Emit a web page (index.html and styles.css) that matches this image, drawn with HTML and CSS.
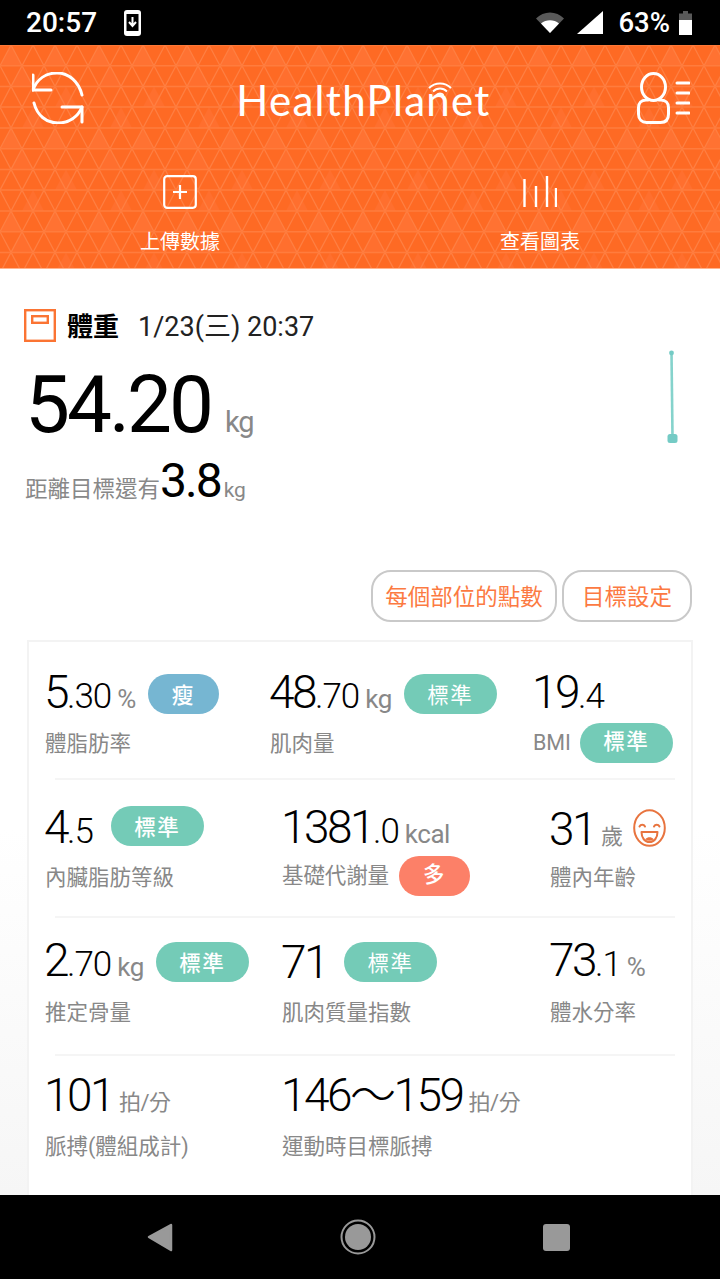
FILE: index.html
```html
<!DOCTYPE html>
<html lang="zh-Hant">
<head>
  <meta charset="UTF-8" />
  <meta name="viewport" content="width=device-width, initial-scale=1.0" />
  <title>HealthPlanet</title>
  <link rel="stylesheet" href="styles.css">
</head>
<body>
  <div class="status-bar">
    <span class="clock">20:57</span>
    <svg class="dl-icon" width="17" height="26" viewBox="0 0 17 26">
      <rect x="0" y="0" width="17" height="26" rx="3" fill="#fff"/>
      <rect x="2.500" y="4" width="12" height="17" fill="#000"/>
      <path d="M8.500 7v8M5 12l3.500 4 3.500-4" stroke="#fff" stroke-width="2" fill="none"/>
    </svg>
    <span class="status-right">
      <svg width="28" height="21" viewBox="0 0 28 21">
        <path d="M0 6.500C7.500-1.500 20.500-1.500 28 6.500L14 21z" fill="#fff" fill-opacity=".35"/>
        <path d="M5 11.500c5.200-4.300 12.800-4.300 18 0L14 21z" fill="#fff"/>
      </svg>
      <svg class="signal" width="26" height="23" viewBox="0 0 26 23"><path d="M26 0v23H0z" fill="#fff"/></svg>
      <span class="battery-pct">63%</span>
      <svg class="battery" width="13" height="24" viewBox="0 0 13 24">
        <path d="M4 0h5v2.500h4V24H0V2.500h4z" fill="#fff" fill-opacity=".35"/>
        <path d="M0 9h13v15H0z" fill="#fff"/>
      </svg>
    </span>
  </div>

  <header class="top">
    <svg class="top-bg" width="100%" height="100%">
      <defs>
        <pattern id="tri" width="88" height="83" patternUnits="userSpaceOnUse">
          <rect width="88" height="83" fill="#fe6a24"/>
          <path d="M11 0l11 20.700H0zM55 0l11 20.700H44z" fill="#ff7232"/>
          <path d="M22 20.700l11 20.700H11zM66 41.400l11 20.700H55zM33 62.100l11 20.900H22z" fill="#ff6f2e"/>
          <path d="M0 20.700L11 0l11 20.700L33 0l11 20.700L55 0l11 20.700L77 0l11 20.700M0 20.700l11 20.700 11-20.700 11 20.700 11-20.700 11 20.700 11-20.700 11 20.700 11-20.700M0 62.100l11-20.700 11 20.700 11-20.700 11 20.700 11-20.700 11 20.700 11-20.700 11 20.700M0 62.100L11 83l11-20.900L33 83l11-20.900L55 83l11-20.900L77 83l11-20.900" stroke="#ff7f42" stroke-width="1.200" fill="none"/>
          <path d="M0 20.700h88M0 41.400h88M0 62.100h88M0 83h88M0 0h88" stroke="#ff7c3d" stroke-width="1.500"/>
        </pattern>
      </defs>
      <rect width="100%" height="100%" fill="url(#tri)"/>
    </svg>
    <div class="top-row">
      <svg width="52" height="52" viewBox="0 0 52 52" fill="none" stroke="#fff" stroke-width="3" stroke-linecap="round" stroke-linejoin="round">
        <path d="M1 18C5 7 14 1 25 1c12 0 22 9 25 22"/>
        <path d="M1 3v15h18"/>
        <path d="M2 31c3 12 12 20 24 20 11 0 20-6 24-16"/>
        <path d="M50 50V35H30"/>
      </svg>
      <div class="logo">HealthPlanet
        <svg class="logo-wifi" width="24" height="15" viewBox="0 0 24 15" fill="none" stroke="#fff" stroke-width="1.800">
          <path d="M1 6c6-6 16-6 22 0M5 9.500c4-4 10-4 14 0M8.500 13c2-2 5-2 7 0"/>
        </svg>
      </div>
      <svg width="53" height="52" viewBox="0 0 53 52" fill="none" stroke="#fff" stroke-width="3" stroke-linecap="round">
        <ellipse cx="16.500" cy="15" rx="12" ry="13.500"/>
        <path d="M11 28H9C4.500 28 1.500 31 1.500 35.500V42c0 5.500 3.500 8.500 8 8.500h14c5 0 8-3 8-8.500v-6.500c0-4.500-3-7.500-7.500-7.500h-2"/>
        <path d="M40 11h12M40 21h12M40 31h12M40 41h12"/>
      </svg>
    </div>
    <div class="actions">
      <div class="action">
        <svg width="34" height="34" viewBox="0 0 34 34" fill="none" stroke="#fff" stroke-width="2.200">
          <rect x="1.200" y="1.200" width="31.600" height="31.600" rx="3"/>
          <path d="M10 17h14M17 10v14"/>
        </svg>
        <span>上傳數據</span>
      </div>
      <div class="action">
        <svg width="34" height="34" viewBox="0 0 34 34" fill="none" stroke="#fff" stroke-width="2.400">
          <path d="M1.500 4v28M13 11v21M24 1v31M33 13v19"/>
        </svg>
        <span>查看圖表</span>
      </div>
    </div>
  </header>

  <main class="content">
    <section class="weight">
      <div class="weight-left">
        <div class="weight-head">
          <svg width="32" height="33" viewBox="0 0 32 33" fill="none" stroke="#fb7433" stroke-width="2.400">
            <rect x="1.200" y="1.200" width="29.600" height="30.600"/>
            <rect x="8.200" y="7.200" width="15.600" height="6.600"/>
          </svg>
          <b>體重</b>
          <span class="weight-date">1/23(三) 20:37</span>
        </div>
        <div class="weight-val">54.20<span class="unit">kg</span></div>
        <div class="weight-goal">距離目標還有<span class="goal-num">3.8</span><span class="goal-unit">kg</span></div>
      </div>
      <svg class="spark" width="12" height="96" viewBox="0 0 12 96">
        <path d="M5.500 4L6.500 88" stroke="#85d3cc" stroke-width="2.600"/>
        <circle cx="5.500" cy="4" r="2.400" fill="#74cbc5"/>
        <rect x="1.500" y="85" width="10" height="9" rx="2.500" fill="#74cbc5"/>
      </svg>
    </section>

    <div class="btn-row">
      <a class="btn">每個部位的點數</a>
      <a class="btn btn-goal">目標設定</a>
    </div>

    <section class="card">
      <div class="row row-1">
        <div class="cell">
          <div class="line"><span class="num">5<small>.30</small></span><span class="unit">%</span><span class="pill pill-thin">瘦</span></div>
          <div class="label">體脂肪率</div>
        </div>
        <div class="cell">
          <div class="line"><span class="num">48<small>.70</small></span><span class="unit">kg</span><span class="pill pill-std pill-light">標準</span></div>
          <div class="label">肌肉量</div>
        </div>
        <div class="cell">
          <div class="line"><span class="num">19<small>.4</small></span></div>
          <div class="label label-pill">BMI<span class="pill pill-std">標準</span></div>
        </div>
      </div>
      <div class="row row-2">
        <div class="cell">
          <div class="line"><span class="num">4<small>.5</small></span><span class="pill pill-std pill-gap">標準</span></div>
          <div class="label">內臟脂肪等級</div>
        </div>
        <div class="cell">
          <div class="line"><span class="num">1381<small>.0</small></span><span class="unit">kcal</span></div>
          <div class="label label-pill">基礎代謝量<span class="pill pill-many">多</span></div>
        </div>
        <div class="cell">
          <div class="line"><span class="num">31</span><span class="unit unit-cjk">歲</span>
            <svg class="face" width="33" height="38" viewBox="0 0 33 38" fill="none" stroke="#e8743f" stroke-width="2">
              <ellipse cx="16.500" cy="19" rx="15.300" ry="17.800"/>
              <path d="M6.500 17.500c1.200-2.400 4.300-2.400 5.500 0M21 17.500c1.200-2.400 4.300-2.400 5.500 0" stroke-linecap="round"/>
              <path d="M8.500 23h16c0 6-3.300 10-8 10s-8-4-8-10z" stroke-linejoin="round"/>
              <path d="M12.500 30c2-2.200 6-2.200 8 0-1.500 2.200-6.500 2.200-8 0z" fill="#e8743f" stroke="none"/>
            </svg>
          </div>
          <div class="label">體內年齡</div>
        </div>
      </div>
      <div class="row row-3">
        <div class="cell">
          <div class="line"><span class="num">2<small>.70</small></span><span class="unit">kg</span><span class="pill pill-std">標準</span></div>
          <div class="label">推定骨量</div>
        </div>
        <div class="cell">
          <div class="line"><span class="num">71</span><span class="pill pill-std pill-light pill-gap2">標準</span></div>
          <div class="label">肌肉質量指數</div>
        </div>
        <div class="cell">
          <div class="line"><span class="num">73<small>.1</small></span><span class="unit">%</span></div>
          <div class="label">體水分率</div>
        </div>
      </div>
      <div class="row row-4">
        <div class="cell">
          <div class="line"><span class="num">101</span><span class="unit unit-cjk">拍/分</span></div>
          <div class="label">脈搏(體組成計)</div>
        </div>
        <div class="cell">
          <div class="line"><span class="num">146～159</span><span class="unit unit-cjk">拍/分</span></div>
          <div class="label">運動時目標脈搏</div>
        </div>
      </div>
    </section>
  </main>

  <nav class="nav-bar">
    <svg width="26" height="30" viewBox="0 0 26 30"><path d="M24 3L2 15l22 13z" fill="#999" stroke="#999" stroke-width="2.500" stroke-linejoin="round"/></svg>
    <svg width="36" height="36" viewBox="0 0 36 36">
      <circle cx="18" cy="18" r="16.500" fill="none" stroke="#999" stroke-width="2"/>
      <circle cx="18" cy="18" r="13" fill="#999"/>
    </svg>
    <svg width="27" height="27" viewBox="0 0 27 27"><rect width="27" height="27" rx="3" fill="#999"/></svg>
  </nav>
</body>
</html>
```
FILE: styles.css
```css
* {
  box-sizing: border-box;
}
html, body {
  margin: 0;
  height: 100%;
}
body {
  display: flex;
  flex-direction: column;
  height: 100vh;
  overflow: hidden;
  font-family: Roboto, "Noto Sans CJK TC", sans-serif;
  background: #fff;
  color: #000;
}

/* status bar */
.status-bar {
  height: 45px;
  flex: none;
  background: #000;
  color: #fff;
  display: flex;
  align-items: center;
  padding: 0 28px 0 26px;
}
.clock {
  font-size: 28px;
  font-weight: 500;
}
.dl-icon {
  margin-left: 27px;
}
.status-right {
  margin-left: auto;
  display: flex;
  align-items: center;
}
.signal {
  margin-left: 13px;
}
.battery-pct {
  margin-left: 15px;
  font-size: 27.500px;
  font-weight: 500;
}
.battery {
  margin-left: 9px;
}

/* orange header */
.top {
  position: relative;
  height: 224px;
  flex: none;
  color: #fff;
  border-bottom: 1px solid #ffb48f;
}
.top-bg {
  position: absolute;
  inset: 0;
}
.top-row {
  position: relative;
  display: flex;
  justify-content: space-between;
  align-items: center;
  padding: 27px 30px 0 32px;
}
.logo {
  position: relative;
  margin: 4px 0 0 6px;
  font-family: Lato, sans-serif;
  font-weight: 400;
  font-size: 42px;
  letter-spacing: 1.300px;
  line-height: 48px;
}
.logo-wifi {
  position: absolute;
  left: 192px;
  top: 6px;
}
.actions {
  position: relative;
  display: grid;
  grid-template-columns: 1fr 1fr;
  margin-top: 51px;
}
.action {
  display: flex;
  flex-direction: column;
  align-items: center;
  font-size: 20px;
  gap: 21px;
  line-height: 24px;
}

/* main area */
.content {
  flex: 1;
  min-height: 0;
  overflow: hidden;
  background: linear-gradient(#fff 0, #fff 560px, #f6f6f6 100%);
}
.weight {
  display: flex;
  justify-content: space-between;
  padding: 39px 42px 0 24px;
  height: 301px;
}
.weight-head {
  display: flex;
  align-items: center;
  height: 34px;
}
.weight-head b {
  margin-left: 11px;
  font-size: 26px;
  font-weight: 700;
  margin-top: -2px;
}
.weight-date {
  margin-left: 19px;
  font-size: 27px;
  color: #222;
  margin-top: -2px;
}
.weight-val {
  margin-top: 17px;
  padding-left: 1px;
  font-size: 80px;
  line-height: 92px;
  letter-spacing: -3px;
}
.weight-val .unit {
  margin-left: 14px;
  font-size: 29px;
  letter-spacing: -1px;
}
.unit {
  color: #888;
}
.weight-goal {
  margin-top: -15px;
  padding-left: 1px;
  font-size: 22.500px;
  color: #888;
  line-height: 56px;
}
.goal-num {
  font-size: 48px;
  color: #000;
  letter-spacing: -2px;
}
.goal-unit {
  margin-left: 3px;
  font-size: 21px;
}
.spark {
  margin-top: 41px;
}

.btn-row {
  display: flex;
  justify-content: flex-end;
  gap: 5px;
  padding-right: 28px;
}
.btn {
  height: 52px;
  width: 186px;
  display: flex;
  align-items: center;
  justify-content: center;
  border: 2px solid #c9c9c9;
  border-radius: 20px;
  background: #fff;
  color: #fc7a42;
  font-size: 22.500px;
  padding-bottom: 3px;
}
.btn-goal {
  width: 130px;
}

/* metric card */
.card {
  margin: 18px 27px 0;
  padding: 0 16px 0 26px;
  background: #fff;
  border: 2px solid #f3f3f3;
  height: 600px;
}
.row {
  height: 138px;
  display: grid;
  grid-template-columns: 227px 268px 1fr;
  border-bottom: 2px solid #f5f5f5;
}
.row:last-child {
  border-bottom: none;
}
.row .cell:first-child {
  margin-left: -10px;
}
.row-1 {
  padding-top: 31px;
  grid-template-columns: 215px 263px 1fr;
}
.row-1 .label {
  margin-top: 13px;
}
.row-1 .label-pill {
  margin-top: 8px;
}
.row-2 {
  padding-top: 28px;
}
.row-2 .label {
  margin-top: 12px;
}
.row-2 .label-pill {
  margin-top: 6px;
}
.row-2 .line .pill {
  margin-top: -6px;
}
.row-3 {
  padding-top: 23px;
}
.row-3 .label {
  margin-top: 14px;
}
.row-4 {
  padding-top: 18px;
}
.row-4 .label {
  margin-top: 15px;
}
.line {
  height: 42px;
  display: flex;
  align-items: center;
  white-space: nowrap;
}
.num {
  margin-left: -1px;
  font-size: 46px;
  font-weight: 300;
  line-height: 42px;
  letter-spacing: -2.500px;
}
.num small {
  font-size: 35px;
  letter-spacing: -1px;
}
.line .unit {
  margin-left: 6px;
  margin-top: 10px;
  font-size: 26px;
  letter-spacing: -.5px;
}
.line .unit-cjk {
  margin-left: 6px;
  font-size: 22px;
}
.label {
  font-size: 21.500px;
  line-height: 32px;
  color: #888;
  white-space: nowrap;
}
.label-pill {
  height: 40px;
  display: flex;
  align-items: center;
  letter-spacing: -.1px;
}
.pill {
  display: inline-flex;
  align-items: center;
  justify-content: center;
  height: 40px;
  border-radius: 20px;
  color: #fff;
  font-size: 21.500px;
  font-weight: 500;
  letter-spacing: 1.500px;
  margin-left: 12px;
  padding-bottom: 2px;
}
.label-pill .pill {
  margin-left: 9px;
}
.label-pill .pill-many {
  margin-left: 10px;
}
.pill-thin {
  width: 71px;
  background: #76b6d2;
}
.pill-std {
  width: 93px;
  background: #74cbb7;
}
.pill-light {
  font-weight: 400;
}
.pill-many {
  width: 71px;
  background: #fc8068;
}
.pill-gap {
  margin-left: 18px;
}
.pill-gap2 {
  margin-left: 17px;
}
.face {
  margin-left: 10px;
  margin-top: -2px;
}

/* android nav */
.nav-bar {
  height: 84px;
  flex: none;
  background: #000;
  display: flex;
  justify-content: space-between;
  align-items: center;
  padding: 0 150px 0 147px;
}
```
